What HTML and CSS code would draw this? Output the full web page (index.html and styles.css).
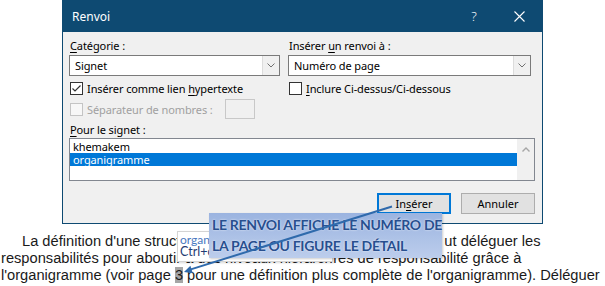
FILE: index.html
```html
<!DOCTYPE html>
<html lang="fr">
<head>
<meta charset="utf-8">
<title>Renvoi</title>
<link rel="stylesheet" href="styles.css">
</head>
<body>
<div class="dialog">
  <div class="titlebar">
    <span class="title">Renvoi</span>
    <span class="cap-btn help">?</span>
    <span class="cap-btn close"><svg width="11" height="11" viewBox="0 0 11 11"><path d="M0.5 0.5 L10.5 10.5 M10.5 0.5 L0.5 10.5" stroke="#fff" stroke-width="1.1" fill="none"/></svg></span>
  </div>
  <div class="body">
    <div class="cols">
      <div class="col">
        <div class="label"><u>C</u>atégorie :</div>
        <div class="select"><span class="sel-text">Signet</span><span class="sel-btn"><svg width="8" height="5" viewBox="0 0 8 5"><path d="M0.5 0.5 L4 4 L7.5 0.5" stroke="#707070" stroke-width="1" fill="none"/></svg></span></div>
        <div class="check"><span class="box"><svg width="11" height="11" viewBox="0 0 11 11"><path d="M1.5 5.5 L4 8 L9.5 2.5" stroke="#333" stroke-width="1.2" fill="none"/></svg></span><span>Insérer comme lien <u>h</u>ypertexte</span></div>
        <div class="check sep"><span class="box off"></span><span>Séparateur de nombres :</span><span class="sep-input"></span></div>
      </div>
      <div class="col">
        <div class="label">Insérer <u>u</u>n renvoi à :</div>
        <div class="select"><span class="sel-text">Numéro de page</span><span class="sel-btn"><svg width="8" height="5" viewBox="0 0 8 5"><path d="M0.5 0.5 L4 4 L7.5 0.5" stroke="#707070" stroke-width="1" fill="none"/></svg></span></div>
        <div class="check"><span class="box"></span><span><u>I</u>nclure Ci-dessus/Ci-dessous</span></div>
      </div>
    </div>
    <div class="label signet"><u>P</u>our le signet :</div>
    <div class="listbox">
      <div class="items">
        <div class="item">khemakem</div>
        <div class="item selected">organigramme</div>
      </div>
      <div class="scroll"><svg width="8" height="5" viewBox="0 0 8 5"><path d="M0.5 4.5 L4 1 L7.5 4.5" stroke="#a6a6a6" stroke-width="1.4" fill="none"/></svg></div>
    </div>
    <div class="buttons">
      <button class="btn default">In<u>s</u>érer</button>
      <button class="btn">Annuler</button>
    </div>
  </div>
</div>

<div class="doc">
  <div class="line first">La définition d'une struc<span class="hid h1">ture organisationnelle pe</span>ut déléguer les</div>
  <div class="line">responsabilités pour abouti<span class="hid h2">r à des niveaux hiérarchiques et aux cent</span>res de responsabilité grâce à</div>
  <div class="line">l'organigramme (voir page <span class="field">3</span> pour une définition plus complète de l'organigramme). Déléguer</div>
</div>

<div class="tooltip">
  <div class="tt-name">organigramme</div>
  <div class="tt-hint">Ctrl+clic pour suivre le lien</div>
</div>

<div class="callout">LE RENVOI AFFICHE LE NUMÉRO DE<br>LA PAGE OU FIGURE LE DÉTAIL</div>

<svg class="arrow" width="605" height="286" viewBox="0 0 605 286">
  <line x1="392" y1="206.5" x2="190" y2="269.6" stroke="#2f6aac" stroke-width="2"/>
  <polygon points="184,272 192.8,273.2 190.4,265.8" fill="#2f6aac"/>
</svg>
</body>
</html>
```

FILE: styles.css
```css
* { box-sizing: border-box; }
html, body { margin: 0; padding: 0; background: #fff; }
body {
  width: 605px;
  height: 286px;
  overflow: hidden;
  position: relative;
  font-family: "Noto Sans", sans-serif;
}
u { text-decoration: underline; text-underline-offset: 2px; }

.dialog {
  margin-left: 62px;
  width: 481px;
  background: #f0f0f0;
  border: 1px solid #0e4a72;
  border-top: 0;
  font-size: 11px;
  letter-spacing: -0.1px;
  color: #000;
}
.titlebar {
  height: 32px;
  background: #0e4a72;
  color: #fff;
  display: flex;
  align-items: center;
  padding-left: 9px;
}
.title { flex: 1; font-size: 12px; letter-spacing: 0; }
.cap-btn {
  width: 46px;
  height: 32px;
  display: flex;
  align-items: center;
  justify-content: center;
}
.cap-btn.help { font-size: 13px; font-weight: 300; }
.cap-btn.close { width: 45px; }

.body { padding: 6px 7px 9px 6px; }
.cols {
  display: grid;
  grid-template-columns: 211px 243px;
  column-gap: 8px;
}
.label { line-height: 15px; height: 15px; padding-left: 1px; margin-bottom: 2px; white-space: nowrap; }
.select {
  height: 21px;
  border: 1px solid #7a7a7a;
  background: #fff;
  display: flex;
  margin-bottom: 5px;
}
.sel-text { flex: 1; padding-left: 5px; line-height: 19px; }
.sel-btn {
  width: 17px;
  background: #f0f0f0;
  border-left: 1px solid #dcdcdc;
  display: flex;
  align-items: center;
  justify-content: center;
}
.check {
  display: flex;
  align-items: center;
  height: 14px;
  padding-left: 1px;
  white-space: nowrap;
}
.box {
  width: 13px;
  height: 13px;
  border: 1px solid #333;
  background: #fff;
  margin-right: 4px;
  display: flex;
  align-items: center;
  justify-content: center;
  flex: none;
}
.check.sep { height: 20px; margin-top: 4px; color: #a0a0a0; }
.box.off { border-color: #c4c4c4; background: #f7f7f7; }
.sep-input {
  width: 30px;
  height: 20px;
  margin-left: 12px;
  border: 1px solid #c8c8c8;
  background: #f0f0f0;
}
.label.signet { margin-top: 3px; margin-bottom: 1px; }

.listbox {
  width: 466px;
  height: 43px;
  border: 1px solid #828790;
  background: #fff;
  display: flex;
}
.items { flex: 1; padding-top: 1px; }
.item { line-height: 13px; height: 13px; padding-left: 3px; }
.item.selected { background: #0078d7; color: #fff; }
.scroll {
  width: 17px;
  background: #f0f0f0;
  display: flex;
  justify-content: center;
  padding-top: 8px;
}
.scroll svg { display: block; }

.buttons {
  display: flex;
  justify-content: flex-end;
  gap: 10px;
  margin-top: 12px;
}
.btn {
  width: 74px;
  height: 21px;
  padding: 0;
  border: 1px solid #adadad;
  background: #e1e1e1;
  font: inherit;
  color: #000;
}
.btn.default { border: 2px solid #0078d7; }

.doc {
  margin: 9px 0 0 1px;
  font-family: "Liberation Sans", Arial, sans-serif;
  font-size: 14.67px;
  line-height: 17px;
  color: #1a1a1a;
  white-space: nowrap;
}
.line.first { padding-left: 21px; }
.hid { display: inline-block; overflow: hidden; vertical-align: top; }
.h1 { width: 268px; }
.h2 { width: 157px; }
.field { background: #a6a6a6; }

.tooltip {
  position: absolute;
  left: 177px;
  top: 231px;
  width: 156px;
  height: 31px;
  background: #fff;
  border: 1px solid #d4d4d4;
  box-shadow: 1px 1px 2px rgba(0,0,0,0.15);
  font-family: Lato, sans-serif;
  font-size: 12px;
  line-height: 12px;
  padding: 2px 0 0 2px;
  overflow: hidden;
  white-space: nowrap;
}
.tt-name { color: #4a78c0; }
.tt-hint { color: #1f3b73; font-size: 12.5px; }

.callout {
  position: absolute;
  left: 209px;
  top: 213px;
  width: 233px;
  height: 45px;
  background: linear-gradient(#9bb4e0, #bccdec);
  padding: 1px 0 0 3px;
  font-family: Lato, sans-serif;
  font-weight: bold;
  font-size: 14px;
  line-height: 21px;
  letter-spacing: -0.3px;
  color: #284f8f;
  text-shadow: 0 0 2px rgba(255,255,255,0.9);
  box-shadow: 1px 1px 2px rgba(0,0,0,0.2);
  white-space: nowrap;
}
.arrow { position: absolute; left: 0; top: 0; pointer-events: none; }
```
